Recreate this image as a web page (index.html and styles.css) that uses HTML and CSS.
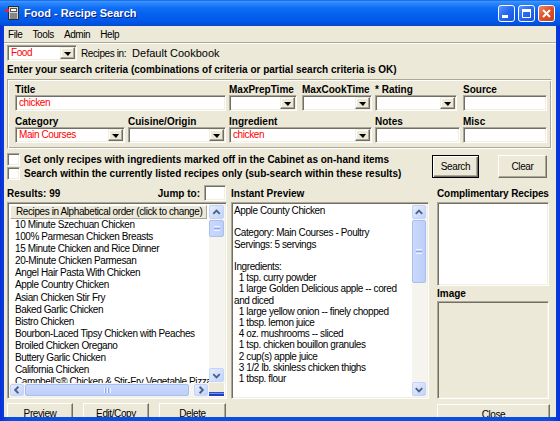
FILE: index.html
```html
<!DOCTYPE html>
<html lang="en">
<head>
    <meta charset="UTF-8">
    <title>Food - Recipe Search</title>
    <link rel="stylesheet" href="styles.css">
</head>
<body>
<div class="window">
    <div class="titlebar">
        <svg class="app-icon" width="16" height="16" viewBox="0 0 16 16">
            <rect x="3.5" y="1.5" width="10" height="13" fill="#d4d4d4" stroke="#2a2a2a"/>
            <rect x="5.5" y="3.5" width="6" height="3" fill="#fff" stroke="#555"/>
            <path d="M5 9h7M5 11h7M5 13h7" stroke="#3a3a3a"/>
            <rect x="0" y="4" width="4" height="3" fill="#e8203c"/>
        </svg>
        <span class="title">Food - Recipe Search</span>
        <div class="caption-btns">
            <span class="cap-btn">
                <svg width="15" height="15" viewBox="0 0 15 15"><rect x="3" y="9" width="6" height="3" fill="#fff"/></svg>
            </span>
            <span class="cap-btn">
                <svg width="15" height="15" viewBox="0 0 15 15"><path d="M3.5 3.5h8v8h-8z" fill="none" stroke="#fff"/><rect x="3" y="3" width="9" height="3" fill="#fff"/></svg>
            </span>
            <span class="cap-btn close">
                <svg width="15" height="15" viewBox="0 0 15 15"><path d="M4 4l7 7M11 4l-7 7" stroke="#fff" stroke-width="2"/></svg>
            </span>
        </div>
    </div>

    <div class="client">
        <div class="menubar">
            <span>File</span><span>Tools</span><span>Admin</span><span>Help</span>
        </div>

        <div class="book-row">
            <div class="combo sunken food-combo"><span class="combo-text">Food</span><span class="combo-btn"></span></div>
            <span class="book-label">Recipes in:</span>
            <span class="book-name">Default Cookbook</span>
        </div>

        <div class="hint">Enter your search criteria (combinations of criteria or partial search criteria is OK)</div>

        <div class="criteria">
            <div class="field span2">
                <label>Title</label>
                <div class="edit sunken">chicken</div>
            </div>
            <div class="field">
                <label>MaxPrepTime</label>
                <div class="combo sunken w68"><span class="combo-text"></span><span class="combo-btn"></span></div>
            </div>
            <div class="field">
                <label>MaxCookTime</label>
                <div class="combo sunken"><span class="combo-text"></span><span class="combo-btn"></span></div>
            </div>
            <div class="field">
                <label>* Rating</label>
                <div class="combo sunken w82"><span class="combo-text"></span><span class="combo-btn"></span></div>
            </div>
            <div class="field">
                <label>Source</label>
                <div class="edit sunken"></div>
            </div>

            <div class="field">
                <label>Category</label>
                <div class="combo sunken"><span class="combo-text">Main Courses</span><span class="combo-btn"></span></div>
            </div>
            <div class="field">
                <label>Cuisine/Origin</label>
                <div class="combo sunken"><span class="combo-text"></span><span class="combo-btn"></span></div>
            </div>
            <div class="field span2">
                <label>Ingredient</label>
                <div class="combo sunken"><span class="combo-text">chicken</span><span class="combo-btn"></span></div>
            </div>
            <div class="field">
                <label>Notes</label>
                <div class="edit sunken"></div>
            </div>
            <div class="field">
                <label>Misc</label>
                <div class="edit sunken"></div>
            </div>
        </div>

        <div class="options">
            <div class="checks">
                <div class="check-row"><span class="checkbox sunken"></span>Get only recipes with ingredients marked off in the Cabinet as on-hand items</div>
                <div class="check-row"><span class="checkbox sunken"></span>Search within the currently listed recipes only (sub-search within these results)</div>
            </div>
            <div class="action-btns">
                <span class="btn default search-btn">Search</span>
                <span class="btn clear-btn">Clear</span>
            </div>
        </div>

        <div class="columns">
            <div class="col list-col">
                <div class="col-head">
                    <span>Results: 99</span>
                    <span class="jump">Jump to:</span>
                    <span class="edit sunken jump-box"></span>
                </div>
                <div class="listbox sunken">
                    <div class="list-body">
                        <div class="list-head">Recipes in Alphabetical order (click to change)</div>
                        <div class="list-items">
                            <div>10 Minute Szechuan Chicken</div>
                            <div>100% Parmesan Chicken Breasts</div>
                            <div>15 Minute Chicken and Rice Dinner</div>
                            <div>20-Minute Chicken Parmesan</div>
                            <div>Angel Hair Pasta With Chicken</div>
                            <div>Apple Country Chicken</div>
                            <div>Asian Chicken Stir Fry</div>
                            <div>Baked Garlic Chicken</div>
                            <div>Bistro Chicken</div>
                            <div>Bourbon-Laced Tipsy Chicken with Peaches</div>
                            <div>Broiled Chicken Oregano</div>
                            <div>Buttery Garlic Chicken</div>
                            <div>California Chicken</div>
                            <div>Campbell's® Chicken &amp; Stir-Fry Vegetable Pizza</div>
                        </div>
                    </div>
                    <div class="vscroll">
                        <span class="sb-btn"><svg width="14" height="13" viewBox="0 0 14 13"><path d="M3.5 8l3.5-3.5 3.5 3.5" fill="none" stroke="#4d6185" stroke-width="2"/></svg></span>
                        <div class="track"><span class="thumb list-thumb"><span class="grip"></span></span></div>
                        <span class="sb-btn"><svg width="14" height="13" viewBox="0 0 14 13"><path d="M3.5 5l3.5 3.5 3.5-3.5" fill="none" stroke="#4d6185" stroke-width="2"/></svg></span>
                    </div>
                    <div class="hscroll">
                        <span class="sb-btn"><svg width="13" height="12" viewBox="0 0 13 12"><path d="M8 2.5l-3.5 3.5 3.5 3.5" fill="none" stroke="#4d6185" stroke-width="2"/></svg></span>
                        <div class="htrack"><span class="hthumb"><span class="vgrip"></span></span></div>
                        <span class="sb-btn"><svg width="13" height="12" viewBox="0 0 13 12"><path d="M5 2.5l3.5 3.5-3.5 3.5" fill="none" stroke="#4d6185" stroke-width="2"/></svg></span>
                    </div>
                    <div class="corner"></div>
                </div>
                <div class="list-btns">
                    <span class="btn">Preview</span>
                    <span class="btn">Edit/Copy</span>
                    <span class="btn">Delete</span>
                </div>
            </div>

            <div class="col preview-col">
                <div class="col-head"><span>Instant Preview</span></div>
                <div class="preview sunken">
                    <div class="preview-text">Apple County Chicken

Category: Main Courses - Poultry
Servings: 5 servings

Ingredients:
  1 tsp. curry powder
  1 large Golden Delicious apple -- cored
and diced
  1 large yellow onion -- finely chopped
  1 tbsp. lemon juice
  4 oz. mushrooms -- sliced
  1 tsp. chicken bouillon granules
  2 cup(s) apple juice
  3 1/2 lb. skinless chicken thighs
  1 tbsp. flour</div>
                    <div class="vscroll">
                        <span class="sb-btn"><svg width="13" height="13" viewBox="0 0 13 13"><path d="M3 8l3.5-3.5 3.5 3.5" fill="none" stroke="#4d6185" stroke-width="2"/></svg></span>
                        <div class="track"><span class="thumb preview-thumb"><span class="grip"></span></span></div>
                        <span class="sb-btn"><svg width="13" height="13" viewBox="0 0 13 13"><path d="M3 5l3.5 3.5 3.5-3.5" fill="none" stroke="#4d6185" stroke-width="2"/></svg></span>
                    </div>
                </div>
            </div>

            <div class="col side-col">
                <div class="col-head"><span>Complimentary Recipes</span></div>
                <div class="compl sunken"></div>
                <div class="side-label">Image</div>
                <div class="image-box sunken"></div>
                <span class="btn close-btn">Close</span>
            </div>
        </div>
    </div>
</div>
</body>
</html>
```

FILE: styles.css
```css
* {
    box-sizing: border-box;
}
html, body {
    margin: 0;
    padding: 0;
}
body {
    width: 560px;
    height: 421px;
    overflow: hidden;
    font-family: "Liberation Sans", Arial, sans-serif;
    font-size: 10px;
    letter-spacing: -0.4px;
    color: #000;
    background: #fff;
}
.window {
    width: 560px;
    height: 421px;
    display: flex;
    flex-direction: column;
    background: linear-gradient(to right, #0831d9, #0a4fe3 2%, #0a4fe3 98%, #0831d9);
}

/* title bar */
.titlebar {
    flex: none;
    height: 26px;
    display: flex;
    align-items: center;
    padding: 0 5px 1px 5px;
    background: linear-gradient(to bottom, #0a5ee8 0%, #3d95ff 6%, #2b86fb 12%, #0f6ef5 30%, #0561ef 55%, #0358e7 80%, #0052de 92%, #0b45c9 100%);
}
.app-icon {
    margin-right: 3px;
}
.title {
    font-weight: bold;
    font-size: 11px;
    letter-spacing: 0;
    color: #fff;
    text-shadow: 1px 1px 0 #0a1f8c;
}
.caption-btns {
    margin-left: auto;
    display: flex;
    gap: 3px;
    margin-top: 1px;
}
.cap-btn {
    width: 17px;
    height: 17px;
    border: 1px solid #fff;
    border-radius: 3px;
    background: linear-gradient(135deg, #5a96ff, #2a6af0 45%, #1854e0);
    display: flex;
    align-items: center;
    justify-content: center;
}
.cap-btn.close {
    background: linear-gradient(135deg, #f08a6a, #e0542c 45%, #c8401c);
}

/* client area */
.client {
    flex: 1;
    margin: 0 4px 4px;
    padding: 0 4px 0 3px;
    background: #ece9d8;
    overflow: hidden;
    display: flex;
    flex-direction: column;
}
.menubar {
    flex: none;
    height: 17px;
    margin: 0 -4px 0 -3px;
    display: flex;
    gap: 2px;
    align-items: center;
    border-bottom: 1px solid #aca899;
    box-shadow: 0 1px 0 #fff;
}
.menubar span {
    padding: 0 4px;
}
.book-row {
    flex: none;
    display: flex;
    align-items: center;
    margin-top: 2px;
}
.food-combo {
    width: 70px;
}
.book-label {
    margin-left: 4px;
}
.book-name {
    margin-left: 6px;
    font-size: 11px;
    letter-spacing: 0;
}
.hint {
    flex: none;
    margin-top: 3px;
    line-height: 12px;
    font-weight: bold;
    letter-spacing: 0;
}

/* sunken 3d edge used by every edit, combo and list */
.sunken {
    background: #fff;
    border: 1px solid;
    border-color: #aca899 #fff #fff #aca899;
    padding: 1px;
    box-shadow: inset 1px 1px 0 #716f64, inset -1px -1px 0 #f1efe2;
}

.edit {
    height: 16px;
    line-height: 12px;
    padding: 1px 3px;
    color: #f00;
}
.combo {
    height: 16px;
    display: flex;
}
.combo-text {
    flex: 1;
    line-height: 12px;
    padding-left: 2px;
    color: #f00;
    white-space: nowrap;
    overflow: hidden;
}
.combo-btn {
    flex: none;
    width: 15px;
    height: 12px;
    background: #ece9d8;
    border: 1px solid;
    border-color: #f1efe2 #716f64 #716f64 #f1efe2;
    box-shadow: inset -1px -1px 0 #aca899, inset 1px 1px 0 #fff;
    display: flex;
    align-items: center;
    justify-content: center;
}
.combo-btn::after {
    content: "";
    border-left: 4px solid transparent;
    border-right: 3px solid transparent;
    border-top: 4px solid #000;
    margin-top: 1px;
}

/* search criteria group */
.criteria {
    flex: none;
    margin-top: 3px;
    padding: 4px 7px 5px;
    border: 1px solid;
    border-color: #aca899 #fff #fff #aca899;
    box-shadow: inset 1px 1px 0 #fff, inset -1px -1px 0 #aca899;
    display: grid;
    grid-template-columns: 110px 98px 70px 70px 85px 84px;
    column-gap: 3px;
    row-gap: 5px;
}
.field {
    display: flex;
    flex-direction: column;
}
.field label {
    line-height: 11px;
    font-weight: bold;
    letter-spacing: 0;
    white-space: nowrap;
}
.span2 {
    grid-column: span 2;
}
.w68 {
    width: 68px;
}
.w82 {
    width: 82px;
}

/* checkboxes and action buttons */
.options {
    flex: none;
    display: flex;
    margin-top: 4px;
}
.check-row {
    height: 14px;
    display: flex;
    align-items: flex-start;
    line-height: 13px;
    font-weight: bold;
    letter-spacing: 0;
    white-space: nowrap;
}
.checkbox {
    flex: none;
    width: 13px;
    height: 13px;
    margin-right: 4px;
}
.action-btns {
    margin-left: auto;
    margin-right: 5px;
    margin-top: 2px;
    display: flex;
    gap: 19px;
}
.btn {
    display: flex;
    align-items: center;
    justify-content: center;
    background: #ece9d8;
    border: 1px solid;
    border-color: #fff #716f64 #716f64 #fff;
    box-shadow: inset -1px -1px 0 #aca899;
}
.btn.default {
    border-color: #000;
    box-shadow: inset 1px 1px 0 #fff, inset -1px -1px 0 #716f64, inset -2px -2px 0 #aca899;
}
.search-btn {
    width: 47px;
    height: 23px;
}
.clear-btn {
    width: 49px;
    height: 23px;
}

/* results, preview and side columns */
.columns {
    flex: none;
    display: flex;
    margin-top: 2px;
}
.col {
    display: flex;
    flex-direction: column;
}
.col-head {
    height: 19px;
    display: flex;
    align-items: center;
    padding-top: 2px;
    font-weight: bold;
    letter-spacing: 0;
    white-space: nowrap;
}
.list-col {
    width: 220px;
}
.preview-col {
    width: 198px;
    margin-left: 4px;
}
.side-col {
    width: 112px;
    margin-left: 8px;
}
.side-col .col-head {
    letter-spacing: -0.1px;
}
.jump {
    margin-left: auto;
}
.jump-box {
    width: 22px;
    margin: -2px 1px 0 4px;
}

.listbox {
    height: 197px;
    display: grid;
    grid-template-columns: 200px 16px;
    grid-template-rows: 179px 14px;
}
.list-body {
    overflow: hidden;
}
.list-head {
    height: 14px;
    margin: 1px 2px 0 1px;
    padding-left: 5px;
    line-height: 12px;
    background: #ece9d8;
    border: 1px solid;
    border-color: #fff #aca899 #aca899 #fff;
    white-space: nowrap;
    overflow: hidden;
}
.list-items div {
    line-height: 12.1px;
    padding-left: 6px;
    white-space: nowrap;
}

/* xp style scroll bars */
.vscroll {
    display: flex;
    flex-direction: column;
    background: #f5f4ef;
}
.sb-btn {
    flex: none;
    height: 14px;
    margin: 1px 1px 0 0;
    border: 1px solid #c3d3fd;
    border-radius: 2px;
    background: linear-gradient(to bottom right, #e6eefc, #c1d3fb);
    display: flex;
    align-items: center;
    justify-content: center;
}
.vscroll .sb-btn:last-child {
    margin: 0 1px 1px 0;
}
.track {
    flex: 1;
    padding: 1px 1px 0 0;
}
.thumb {
    display: flex;
    align-items: center;
    justify-content: center;
    border: 1px solid #a9bfef;
    border-radius: 2px;
    background: linear-gradient(to right, #cad8fd, #bdcff9);
}
.list-thumb {
    height: 17px;
}
.preview-thumb {
    height: 63px;
}
.grip {
    width: 6px;
    height: 5px;
    border-top: 1px solid #eef3ff;
    border-bottom: 1px solid #eef3ff;
    background: linear-gradient(to bottom, transparent 1px, #8fa9e6 1px, #8fa9e6 2px, transparent 2px);
}
.hscroll {
    display: flex;
    background: #f5f4ef;
    padding-bottom: 1px;
}
.hscroll .sb-btn {
    width: 14px;
    height: auto;
    margin: 1px 1px 0 1px;
}
.htrack {
    flex: 1;
    padding: 1px 4px 0 0;
}
.hthumb {
    height: 100%;
    display: flex;
    align-items: center;
    justify-content: center;
    border: 1px solid #a9bfef;
    border-radius: 2px;
    background: linear-gradient(to bottom, #cad8fd, #bdcff9);
}
.vgrip {
    width: 7px;
    height: 5px;
    background: repeating-linear-gradient(to right, #eef3ff 0, #eef3ff 1px, #8fa9e6 1px, #8fa9e6 2px, transparent 2px, transparent 3px);
}
.corner {
    background: linear-gradient(to bottom, #ece9d8 9px, #2a4fd0 9px, #2a4fd0 10px, #6d8ff0 10px, #6d8ff0 11px, #1b3fc5 11px);
    margin: 0 1px 1px 0;
}

.list-btns {
    display: flex;
    gap: 10px;
    margin-top: 4px;
}
.list-btns .btn {
    width: 66px;
    height: 20px;
    padding-top: 1px;
}
.list-btns .btn:last-child {
    width: 67px;
}

.preview {
    height: 197px;
    display: flex;
}
.preview-text {
    flex: 1;
    padding: 1px 0 0 1px;
    line-height: 11.2px;
    white-space: pre;
    overflow: hidden;
}
.preview .vscroll {
    width: 15px;
}

.compl {
    height: 84px;
}
.side-label {
    height: 15px;
    line-height: 15px;
    font-weight: bold;
    letter-spacing: 0;
}
.image-box {
    height: 98px;
    background: #ece9d8;
}
.close-btn {
    margin-top: 5px;
    height: 20px;
    width: 113px;
}
```
